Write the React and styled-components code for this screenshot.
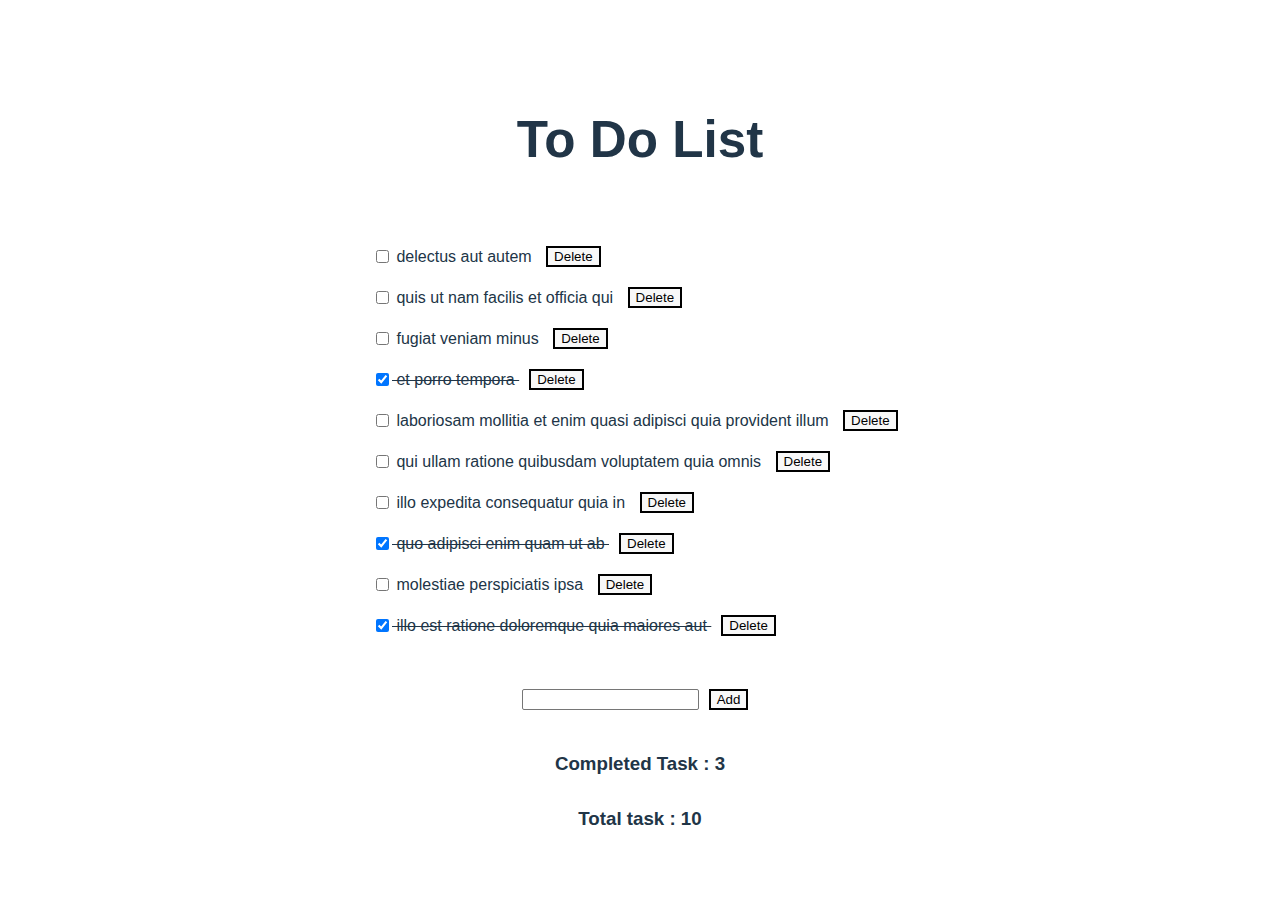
import React, { useState } from "react";
import styled, { createGlobalStyle } from "styled-components";

const GlobalStyle = createGlobalStyle`
  body {
    margin: 0;
    background: #ffffff;
    color: #213547;
    font-family: "Liberation Sans", Arial, sans-serif;
    font-size: 16px;
  }
`;

const initialTodos = [
  { id: 1, title: "delectus aut autem", completed: false },
  { id: 2, title: "quis ut nam facilis et officia qui", completed: false },
  { id: 3, title: "fugiat veniam minus", completed: false },
  { id: 4, title: "et porro tempora", completed: true },
  { id: 5, title: "laboriosam mollitia et enim quasi adipisci quia provident illum", completed: false },
  { id: 6, title: "qui ullam ratione quibusdam voluptatem quia omnis", completed: false },
  { id: 7, title: "illo expedita consequatur quia in", completed: false },
  { id: 8, title: "quo adipisci enim quam ut ab", completed: true },
  { id: 9, title: "molestiae perspiciatis ipsa", completed: false },
  { id: 10, title: "illo est ratione doloremque quia maiores aut", completed: true },
];

export default function App() {
  const [todos, setTodos] = useState(initialTodos);
  const [text, setText] = useState("");

  const toggle = (id) =>
    setTodos(todos.map((t) => (t.id === id ? { ...t, completed: !t.completed } : t)));
  const remove = (id) => setTodos(todos.filter((t) => t.id !== id));
  const add = () => {
    if (!text.trim()) return;
    setTodos([...todos, { id: Date.now(), title: text, completed: false }]);
    setText("");
  };

  const done = todos.filter((t) => t.completed).length;

  return (
    <Page>
      <GlobalStyle />
      <Title>To Do List</Title>
      <List>
        {todos.map((t) => (
          <Item key={t.id}>
            <Check type="checkbox" checked={t.completed} onChange={() => toggle(t.id)} />
            <Label $done={t.completed}>{"\u00a0" + t.title + "\u00a0"}</Label>
            <SmallButton onClick={() => remove(t.id)}>Delete</SmallButton>
          </Item>
        ))}
      </List>
      <AddRow>
        <TextInput value={text} onChange={(e) => setText(e.target.value)} />
        <SmallButton onClick={add}>Add</SmallButton>
      </AddRow>
      <Stat $gap={43}>Completed Task : {done}</Stat>
      <Stat $gap={33}>Total task : {todos.length}</Stat>
    </Page>
  );
}

const Page = styled.div`
  display: flex;
  flex-direction: column;
  align-items: center;
  padding-top: 112px;
  padding-bottom: 60px;
`;

const Title = styled.h1`
  margin: 0;
  font-size: 51.2px;
  line-height: 56px;
  font-weight: 700;
  color: #213547;
`;

const List = styled.ul`
  list-style: none;
  margin: 78px 0 0;
  padding: 0 0 0 372px;
  width: 100%;
  box-sizing: border-box;
  display: flex;
  flex-direction: column;
  gap: 20px;
`;

const Item = styled.li`
  display: flex;
  align-items: center;
  height: 21px;
`;

const Check = styled.input`
  margin: 0 3px 0 4px;
  width: 13px;
  height: 13px;
`;

const Label = styled.span`
  font-size: 16px;
  line-height: 21px;
  color: #213547;
  text-decoration: ${(p) => (p.$done ? "line-through" : "none")};
  margin-right: 10px;
`;

const SmallButton = styled.button`
  font-family: "Liberation Sans", Arial, sans-serif;
  font-size: 13.33px;
  line-height: 15px;
  padding: 1px 6px;
  border: 2px solid #000000;
  border-radius: 0;
  background: #f8f8f8;
  color: #000000;
  cursor: pointer;
`;

const AddRow = styled.div`
  display: flex;
  align-items: center;
  gap: 10px;
  margin-top: 53px;
  margin-right: 10px;
`;

const TextInput = styled.input`
  width: 177px;
  height: 21px;
  box-sizing: border-box;
  border: 1px solid #767676;
  border-radius: 2px;
  padding: 1px 2px;
  font-family: "Liberation Sans", Arial, sans-serif;
  font-size: 13.33px;
`;

const Stat = styled.h3`
  margin: ${(p) => p.$gap}px 0 0;
  font-size: 18.72px;
  line-height: 22px;
  font-weight: 700;
  color: #213547;
`;
